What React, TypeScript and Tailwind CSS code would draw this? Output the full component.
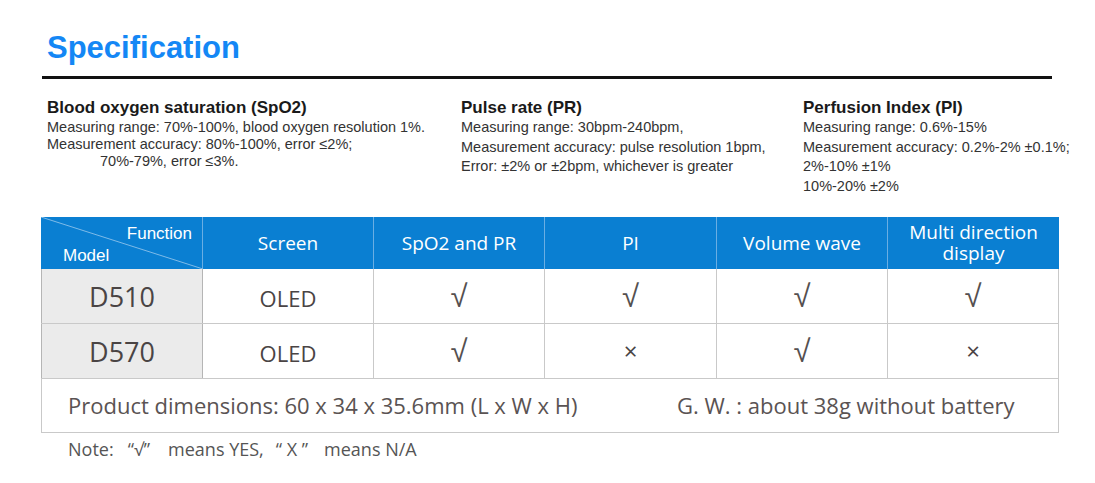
import React from "react";

const heads = ["Screen", "SpO2 and PR", "PI", "Volume wave"];

const rows = [
  { model: "D510", cells: ["OLED", "√", "√", "√", "√"] },
  { model: "D570", cells: ["OLED", "√", "×", "√", "×"] },
];

function Mark({ v }: { v: string }) {
  if (v === "√")
    return (
      <span className="text-[31px] leading-none font-['Liberation_Sans',sans-serif] text-[#555050]">
        √
      </span>
    );
  if (v === "×")
    return <span className="text-[24px] leading-none text-[#4a4444]">×</span>;
  return <span className="text-[22px] translate-y-[2px]">{v}</span>;
}

export default function App() {
  return (
    <div className="w-[1095px] h-[483px] bg-white font-['Liberation_Sans',Arial,sans-serif] overflow-hidden">
      <div className="pt-[30px] pl-[47px]">
        <h1 className="text-[31px] leading-[36px] font-bold text-[#1487f5]">Specification</h1>
      </div>
      <div className="ml-[42px] mt-[10px] w-[1010px] h-[3px] bg-[#111]" />

      <div className="flex mt-[19px] text-[#333] text-[14.5px]">
        <div className="w-[461px] pl-[47px]">
          <div className="text-[17px] leading-[20px] font-bold text-[#1a1a1a]">
            Blood oxygen saturation (SpO2)
          </div>
          <div className="leading-[17px] mt-[1px]">
            <div>Measuring range: 70%-100%, blood oxygen resolution 1%.</div>
            <div>Measurement accuracy: 80%-100%, error ≤2%;</div>
            <div className="pl-[53px]">70%-79%, error ≤3%.</div>
          </div>
        </div>
        <div className="w-[342px]">
          <div className="text-[17px] leading-[20px] font-bold text-[#1a1a1a]">Pulse rate (PR)</div>
          <div className="leading-[19.5px]">
            <div>Measuring range: 30bpm-240bpm,</div>
            <div>Measurement accuracy: pulse resolution 1bpm,</div>
            <div>Error: ±2% or ±2bpm, whichever is greater</div>
          </div>
        </div>
        <div>
          <div className="text-[17px] leading-[20px] font-bold text-[#1a1a1a]">Perfusion Index (PI)</div>
          <div className="leading-[19.5px]">
            <div>Measuring range: 0.6%-15%</div>
            <div>Measurement accuracy: 0.2%-2% ±0.1%;</div>
            <div>2%-10% ±1%</div>
            <div>10%-20% ±2%</div>
          </div>
        </div>
      </div>

      <div className="ml-[41px] mt-[21px] w-[1018px] font-['Open_Sans',sans-serif]">
        <div className="grid grid-cols-[162px_171px_171px_172px_171px_171px] h-[52px] bg-[#0a7fd2] text-white text-[19px]">
          <div className="relative border-r border-[#6aaee3]">
            <svg className="absolute inset-0" width="162" height="52" viewBox="0 0 162 52">
              <line x1="0" y1="0" x2="162" y2="52" stroke="#7fbbe8" strokeWidth="1" />
            </svg>
            <span className="absolute right-[10px] top-[4px] text-[17px] font-['Liberation_Sans',Arial,sans-serif]">
              Function
            </span>
            <span className="absolute left-[22px] top-[26px] text-[17px] font-['Liberation_Sans',Arial,sans-serif]">
              Model
            </span>
          </div>
          {heads.map((h) => (
            <div key={h} className="flex items-center justify-center border-r border-[#6aaee3]">
              {h}
            </div>
          ))}
          <div className="flex flex-col items-center justify-center leading-[21px] pb-[2px]">
            <span className="leading-[20px]">Multi direction</span>
            <span className="leading-[20px] mt-[1px]">display</span>
          </div>
        </div>

        {rows.map((r) => (
          <div
            key={r.model}
            className="grid grid-cols-[162px_171px_171px_172px_171px_171px] h-[55px] border-b border-[#c9c9c9] text-[#4a4444]"
          >
            <div className="flex items-center justify-center bg-[#ebebeb] border-l border-r border-[#b5b5b5] text-[27px] pt-[2px]">
              {r.model}
            </div>
            {r.cells.map((c, i) => (
              <div
                key={i}
                className="flex items-center justify-center border-r border-[#c9c9c9]"
              >
                <Mark v={c} />
              </div>
            ))}
          </div>
        ))}

        <div className="h-[54px] border-l border-r border-b border-[#c9c9c9] flex items-center pl-[26px] text-[22px] text-[#5a5353]">
          <span className="w-[609px]">Product dimensions: 60 x 34 x 35.6mm (L x W x H)</span>
          <span>G. W. : about 38g without battery</span>
        </div>
      </div>

      <div className="flex pl-[68px] mt-[3px] text-[18px] text-[#555] font-['Open_Sans',sans-serif] whitespace-pre">
        <span>Note:</span>
        <span className="ml-[14px]">“√”</span>
        <span className="ml-[18px]">means YES,</span>
        <span className="ml-[12px]">“ X ”</span>
        <span className="ml-[16px]">means N/A</span>
      </div>
    </div>
  );
}
